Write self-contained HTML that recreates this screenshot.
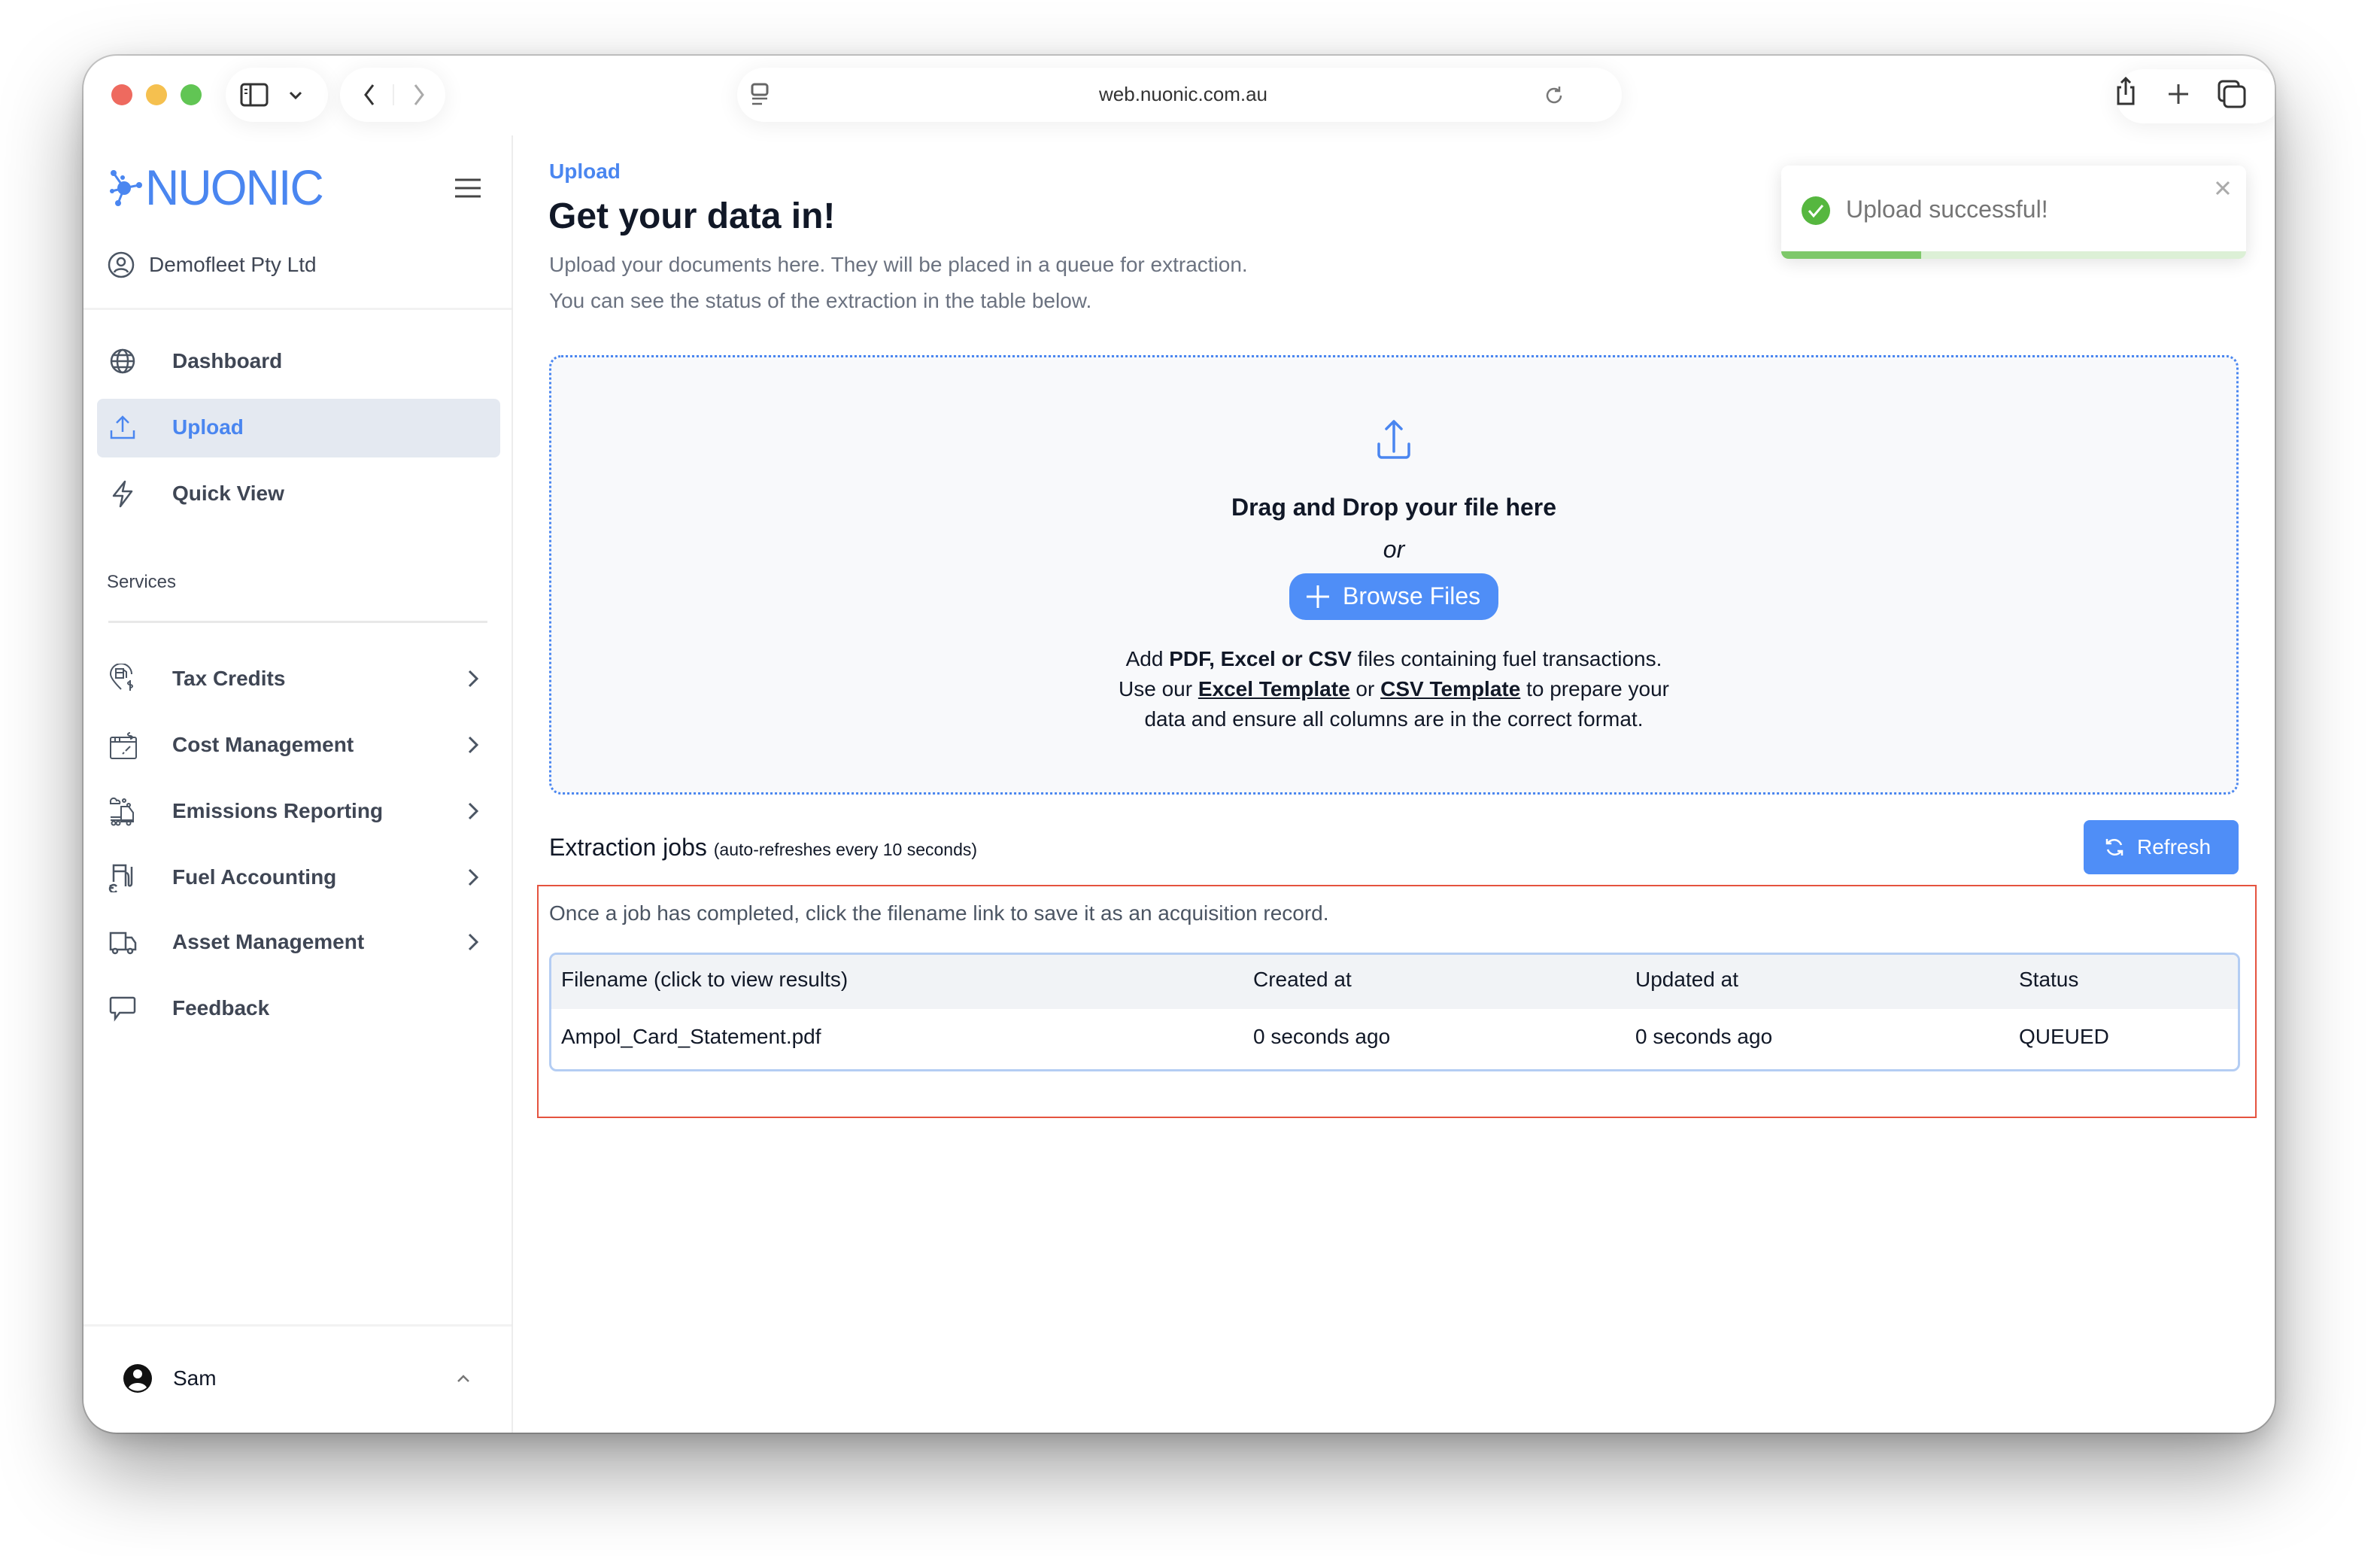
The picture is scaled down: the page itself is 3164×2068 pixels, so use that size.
<!DOCTYPE html>
<html><head><meta charset="utf-8">
<style>
*{box-sizing:border-box;margin:0;padding:0}
html,body{width:3164px;height:2068px;overflow:hidden;background:#fff;font-family:"Liberation Sans",sans-serif}
.win{position:absolute;left:111px;top:74px;width:2913px;height:1830px;background:#fff;border-radius:44px;box-shadow:0 0 0 2px rgba(0,0,0,.18),0 50px 110px rgba(0,0,0,.38),0 10px 30px rgba(0,0,0,.15);overflow:hidden}
.abs{position:absolute}
.pill{position:absolute;background:#fff;border-radius:36px;box-shadow:0 4px 30px rgba(0,0,0,.07)}
.dot{position:absolute;width:28px;height:28px;border-radius:50%;top:38px}
.side{position:absolute;left:0;top:0;width:570px;bottom:0}
.nav{position:absolute;left:118px;font-size:28px;font-weight:bold;color:#3f4654}
.ic{position:absolute;left:32px;width:40px;height:40px}
.chev{position:absolute;left:508px}
.txt{position:absolute;white-space:nowrap}
</style></head><body>
<div class="win">
  <!-- toolbar -->
  <div class="dot" style="left:37px;background:#ee6a5f"></div>
  <div class="dot" style="left:83px;background:#f5c04f"></div>
  <div class="dot" style="left:129px;background:#61c554"></div>
  <div class="pill" style="left:189px;top:16px;width:136px;height:72px"></div>
  <svg class="abs" style="left:208px;top:36px" width="40" height="32" viewBox="0 0 40 32"><rect x="2" y="2" width="34" height="28" rx="4" fill="none" stroke="#333" stroke-width="3"/><line x1="14" y1="2" x2="14" y2="30" stroke="#333" stroke-width="3"/><line x1="6" y1="9" x2="10" y2="9" stroke="#333" stroke-width="2"/><line x1="6" y1="14" x2="10" y2="14" stroke="#333" stroke-width="2"/></svg>
  <svg class="abs" style="left:272px;top:46px" width="20" height="14" viewBox="0 0 20 14"><path d="M3 3l7 7 7-7" fill="none" stroke="#333" stroke-width="3"/></svg>
  <div class="pill" style="left:341px;top:16px;width:140px;height:72px"></div>
  <svg class="abs" style="left:370px;top:36px" width="20" height="32"><path d="M15 3L5 16l10 13" fill="none" stroke="#333" stroke-width="3"/></svg>
  <div class="abs" style="left:411px;top:38px;width:2px;height:28px;background:#eee"></div>
  <svg class="abs" style="left:436px;top:36px" width="20" height="32"><path d="M5 3l10 13L5 29" fill="none" stroke="#aaa" stroke-width="3"/></svg>
  <div class="pill" style="left:869px;top:16px;width:1176px;height:72px"></div>
  <svg class="abs" style="left:886px;top:36px" width="26" height="32"><rect x="3" y="2" width="20" height="14" rx="3" fill="none" stroke="#666" stroke-width="3"/><line x1="3" y1="21" x2="23" y2="21" stroke="#666" stroke-width="2.5"/><line x1="3" y1="28" x2="16" y2="28" stroke="#666" stroke-width="2.5"/></svg>
  <div class="txt" style="left:1350px;top:36px;width:218px;text-align:center;font-size:26px;color:#333">web.nuonic.com.au</div>
  <svg class="abs" style="left:1940px;top:38px" width="30" height="30" viewBox="0 0 30 30"><path d="M24 15a9 9 0 1 1-3-6.7" fill="none" stroke="#777" stroke-width="2.5"/><path d="M22 3v6h-6" fill="none" stroke="#777" stroke-width="2.5"/></svg>
  <div class="pill" style="left:2702px;top:18px;width:220px;height:72px"></div>
  <svg class="abs" style="left:2698px;top:26px" width="34" height="42" viewBox="0 0 34 42"><path d="M11 16H7v22h20V16h-4M17 4v22M11 10l6-6 6 6" fill="none" stroke="#333" stroke-width="3"/></svg>
  <svg class="abs" style="left:2770px;top:36px" width="30" height="30"><path d="M15 2v26M2 15h26" stroke="#444" stroke-width="3"/></svg>
  <svg class="abs" style="left:2837px;top:32px" width="38" height="38"><rect x="2" y="2" width="26" height="26" rx="5" fill="none" stroke="#333" stroke-width="3"/><rect x="9" y="9" width="27" height="27" rx="5" fill="#fff" stroke="#333" stroke-width="3"/></svg>

  <!-- sidebar -->
  <div class="abs" style="left:569px;top:106px;width:2px;height:1730px;background:#ececec"></div>
  <div class="side">
    <svg class="abs" style="left:34px;top:150px" width="48" height="52" viewBox="0 0 48 52"><g fill="#4a86f0"><circle cx="6" cy="6" r="4"/><circle cx="20" cy="26" r="9"/><circle cx="4" cy="30" r="3"/><circle cx="40" cy="22" r="4"/><circle cx="12" cy="46" r="4"/><circle cx="18" cy="12" r="3"/></g><g stroke="#4a86f0" stroke-width="3"><path d="M6 6L20 26M4 30L20 26M40 22L20 26M12 46L20 26"/></g></svg>
    <div class="txt" style="left:82px;top:137px;font-size:66px;color:#4a86f0;letter-spacing:-2px;transform:scaleX(.95);transform-origin:left">NUONIC</div>
    <svg class="abs" style="left:492px;top:162px" width="38" height="28"><path d="M2 3h34M2 14h34M2 25h34" stroke="#444" stroke-width="3"/></svg>
    <svg class="abs" style="left:30px;top:258px" width="40" height="40" viewBox="0 0 40 40"><circle cx="20" cy="20" r="16" fill="none" stroke="#4b5563" stroke-width="2.5"/><circle cx="20" cy="16" r="5" fill="none" stroke="#4b5563" stroke-width="2.5"/><path d="M11 30c2-6 16-6 18 0" fill="none" stroke="#4b5563" stroke-width="2.5"/></svg>
    <div class="txt" style="left:87px;top:262px;font-size:28px;color:#3f4654">Demofleet Pty Ltd</div>
    <div class="abs" style="left:0;top:335px;width:569px;height:3px;background:#f2f2f2"></div>

    <svg class="ic" style="top:386px" viewBox="0 0 40 40"><g fill="none" stroke="#4b5563" stroke-width="2.5"><circle cx="20" cy="20" r="15"/><ellipse cx="20" cy="20" rx="7" ry="15"/><path d="M5 20h30M8 12h24M8 28h24"/></g></svg>
    <div class="nav" style="top:390px">Dashboard</div>
    <div class="abs" style="left:18px;top:456px;width:536px;height:78px;background:#e4e9f1;border-radius:8px"></div>
    <svg class="ic" style="top:474px" viewBox="0 0 40 40"><g fill="none" stroke="#4a86f0" stroke-width="2.5"><path d="M20 26V6M12 14l8-8 8 8M5 24v10h30V24"/></g></svg>
    <div class="nav" style="top:478px;color:#4a86f0">Upload</div>
    <svg class="ic" style="top:562px" viewBox="0 0 40 40"><path d="M23 4L8 23h12l-3 14 15-20H20z" fill="none" stroke="#4b5563" stroke-width="2.5" stroke-linejoin="round"/></svg>
    <div class="nav" style="top:566px">Quick View</div>

    <div class="txt" style="left:31px;top:686px;font-size:24px;color:#3f4654">Services</div>
    <div class="abs" style="left:33px;top:751px;width:504px;height:3px;background:#e8e8e8"></div>

    <svg class="ic" style="top:808px" viewBox="0 0 40 40"><g fill="none" stroke="#4b5563" stroke-width="2"><path d="M18 34C8 24 4 18 4 14a14 14 0 0 1 28 0"/><rect x="11" y="7" width="10" height="12"/><path d="M11 12h10M21 8l4 3v8M30 24c-4 0-4 4 0 4s4 4 0 4M30 22v14"/></g></svg>
    <div class="nav" style="top:812px">Tax Credits</div>
    <svg class="ic" style="top:896px" viewBox="0 0 40 40"><g fill="none" stroke="#4b5563" stroke-width="2"><rect x="4" y="10" width="34" height="28" rx="2"/><path d="M4 16h34M10 10v6M16 10v6M24 28l6-6M20 32l2-2M30 4c-4 0-4 4 0 4s4 4 0 4"/></g></svg>
    <div class="nav" style="top:900px">Cost Management</div>
    <svg class="ic" style="top:984px" viewBox="0 0 40 40"><g fill="none" stroke="#4b5563" stroke-width="2"><path d="M4 8a4 4 0 0 1 8-2 3 3 0 0 1 4 4H4z"/><circle cx="22" cy="6" r="2"/><circle cx="28" cy="12" r="2"/><path d="M18 14h10l6 8v12H18zM4 32h30M4 28h14"/><circle cx="8" cy="36" r="2.5"/><circle cx="14" cy="36" r="2.5"/><circle cx="28" cy="36" r="2.5"/></g></svg>
    <div class="nav" style="top:988px">Emissions Reporting</div>
    <svg class="ic" style="top:1072px" viewBox="0 0 40 40"><g fill="none" stroke="#4b5563" stroke-width="2.5"><path d="M8 26V4h16v28M8 12h16M24 14c4 0 4 4 4 8v8c0 2 4 2 4-2V6"/><path d="M12 32a5 5 0 1 0 0 6M4 30v4h4"/></g></svg>
    <div class="nav" style="top:1076px">Fuel Accounting</div>
    <svg class="ic" style="top:1158px" viewBox="0 0 40 40"><g fill="none" stroke="#4b5563" stroke-width="2.5"><path d="M4 8h20v22H4zM24 14h8l5 7v9H24"/><circle cx="10" cy="32" r="3" fill="#fff"/><circle cx="30" cy="32" r="3" fill="#fff"/></g></svg>
    <div class="nav" style="top:1162px">Asset Management</div>
    <svg class="ic" style="top:1246px" viewBox="0 0 40 40"><path d="M6 6h28a2 2 0 0 1 2 2v16a2 2 0 0 1-2 2H16l-6 8v-8H6a2 2 0 0 1-2-2V8a2 2 0 0 1 2-2z" fill="none" stroke="#4b5563" stroke-width="2.5"/></svg>
    <div class="nav" style="top:1250px">Feedback</div>

    <svg class="chev" style="top:814px" width="20" height="28"><path d="M5 4l10 10-10 10" fill="none" stroke="#4b5563" stroke-width="3"/></svg>
    <svg class="chev" style="top:902px" width="20" height="28"><path d="M5 4l10 10-10 10" fill="none" stroke="#4b5563" stroke-width="3"/></svg>
    <svg class="chev" style="top:990px" width="20" height="28"><path d="M5 4l10 10-10 10" fill="none" stroke="#4b5563" stroke-width="3"/></svg>
    <svg class="chev" style="top:1078px" width="20" height="28"><path d="M5 4l10 10-10 10" fill="none" stroke="#4b5563" stroke-width="3"/></svg>
    <svg class="chev" style="top:1164px" width="20" height="28"><path d="M5 4l10 10-10 10" fill="none" stroke="#4b5563" stroke-width="3"/></svg>

    <div class="abs" style="left:0;top:1686px;width:569px;height:3px;background:#f2f2f2"></div>
    <svg class="abs" style="left:52px;top:1738px" width="40" height="40" viewBox="0 0 40 40"><circle cx="20" cy="20" r="19" fill="#111"/><circle cx="20" cy="14" r="6" fill="#fff"/><path d="M8 32c4-8 20-8 24 0a18 18 0 0 1-24 0z" fill="#fff"/></svg>
    <div class="txt" style="left:119px;top:1742px;font-size:28px;color:#111827">Sam</div>
    <svg class="abs" style="left:494px;top:1750px" width="22" height="16"><path d="M4 12l7-7 7 7" fill="none" stroke="#777" stroke-width="2.5"/></svg>
  </div>

  <!-- main -->
  <div class="txt" style="left:619px;top:138px;font-size:28px;font-weight:bold;color:#4a86f0">Upload</div>
  <div class="txt" style="left:618px;top:186px;font-size:48px;font-weight:bold;color:#111827">Get your data in!</div>
  <div class="txt" style="left:619px;top:262px;font-size:28px;color:#6b7280">Upload your documents here. They will be placed in a queue for extraction.</div>
  <div class="txt" style="left:619px;top:310px;font-size:28px;color:#6b7280">You can see the status of the extraction in the table below.</div>

  <div class="abs" style="left:619px;top:398px;width:2246px;height:584px;background:#f8f9fb;border:3px dotted #4a86f0;border-radius:16px"></div>
  <svg class="abs" style="left:1716px;top:482px" width="52" height="56" viewBox="0 0 52 56"><path d="M26 44V4M16 14l10-10 10 10M6 34v14a4 4 0 0 0 4 4h32a4 4 0 0 0 4-4V34" fill="none" stroke="#4a86f0" stroke-width="3.5" stroke-linecap="round" stroke-linejoin="round"/></svg>
  <div class="txt" style="left:619px;top:582px;width:2246px;text-align:center;font-size:32px;font-weight:bold;color:#111827">Drag and Drop your file here</div>
  <div class="txt" style="left:619px;top:638px;width:2246px;text-align:center;font-size:32px;font-style:italic;color:#111827">or</div>
  <div class="abs" style="left:1603px;top:688px;width:278px;height:62px;background:#4f8ef7;border-radius:22px"></div>
  <svg class="abs" style="left:1624px;top:702px" width="34" height="34"><path d="M17 2v30M2 17h30" stroke="#fff" stroke-width="3"/></svg>
  <div class="txt" style="left:1674px;top:700px;font-size:32px;color:#fff">Browse Files</div>
  <div style="position:absolute;left:619px;top:782px;width:2246px;text-align:center;font-size:28px;line-height:40px;color:#111827">Add <b>PDF, Excel or CSV</b> files containing fuel transactions.<br>Use our <b><u>Excel Template</u></b> or <b><u>CSV Template</u></b> to prepare your<br>data and ensure all columns are in the correct format.</div>

  <div class="txt" style="left:619px;top:1034px;font-size:32px;color:#111827">Extraction jobs <span style="font-size:23px">(auto-refreshes every 10 seconds)</span></div>
  <div class="abs" style="left:2659px;top:1016px;width:206px;height:72px;background:#4f8ef7;border-radius:8px"></div>
  <svg class="abs" style="left:2686px;top:1038px" width="28" height="28" viewBox="0 0 28 28"><g fill="none" stroke="#fff" stroke-width="2.5"><path d="M23 11A10 10 0 0 0 5 9M5 17a10 10 0 0 0 18 2"/><path d="M4 3v6h6M24 25v-6h-6"/></g></svg>
  <div class="txt" style="left:2730px;top:1036px;font-size:28px;color:#fff">Refresh</div>

  <div class="abs" style="left:603px;top:1102px;width:2286px;height:310px;border:2.5px solid #e5533f"></div>
  <div class="txt" style="left:619px;top:1124px;font-size:28px;color:#4b5563">Once a job has completed, click the filename link to save it as an acquisition record.</div>
  <div class="abs" style="left:619px;top:1192px;width:2248px;height:158px;border:3px solid #b4cdf3;border-radius:10px;overflow:hidden;background:#fff">
    <div class="abs" style="left:0;top:0;width:100%;height:72px;background:#f1f3f6"></div>
  </div>
  <div class="txt" style="left:635px;top:1212px;font-size:28px;color:#111827">Filename (click to view results)</div>
  <div class="txt" style="left:1555px;top:1212px;font-size:28px;color:#111827">Created at</div>
  <div class="txt" style="left:2063px;top:1212px;font-size:28px;color:#111827">Updated at</div>
  <div class="txt" style="left:2573px;top:1212px;font-size:28px;color:#111827">Status</div>
  <div class="txt" style="left:635px;top:1288px;font-size:28px;color:#111827">Ampol_Card_Statement.pdf</div>
  <div class="txt" style="left:1555px;top:1288px;font-size:28px;color:#111827">0 seconds ago</div>
  <div class="txt" style="left:2063px;top:1288px;font-size:28px;color:#111827">0 seconds ago</div>
  <div class="txt" style="left:2573px;top:1288px;font-size:28px;color:#111827">QUEUED</div>

  <!-- toast -->
  <div class="abs" style="left:2257px;top:146px;width:618px;height:124px;background:#fff;border-radius:10px;box-shadow:0 4px 24px rgba(0,0,0,.12);overflow:hidden">
    <div class="abs" style="left:0;bottom:0;width:100%;height:10px;background:#dcf0d6"></div>
    <div class="abs" style="left:0;bottom:0;width:186px;height:10px;background:#7ec86a"></div>
  </div>
  <svg class="abs" style="left:2283px;top:186px" width="40" height="40" viewBox="0 0 40 40"><circle cx="20" cy="20" r="19" fill="#56b73f"/><path d="M11 20l6 7 12-14" fill="none" stroke="#fff" stroke-width="3"/></svg>
  <div class="txt" style="left:2343px;top:186px;font-size:32px;color:#757575">Upload successful!</div>
  <svg class="abs" style="left:2833px;top:165px" width="22" height="22"><path d="M3 3l16 16M19 3L3 19" stroke="#aaa" stroke-width="3"/></svg>
</div>
</body></html>
